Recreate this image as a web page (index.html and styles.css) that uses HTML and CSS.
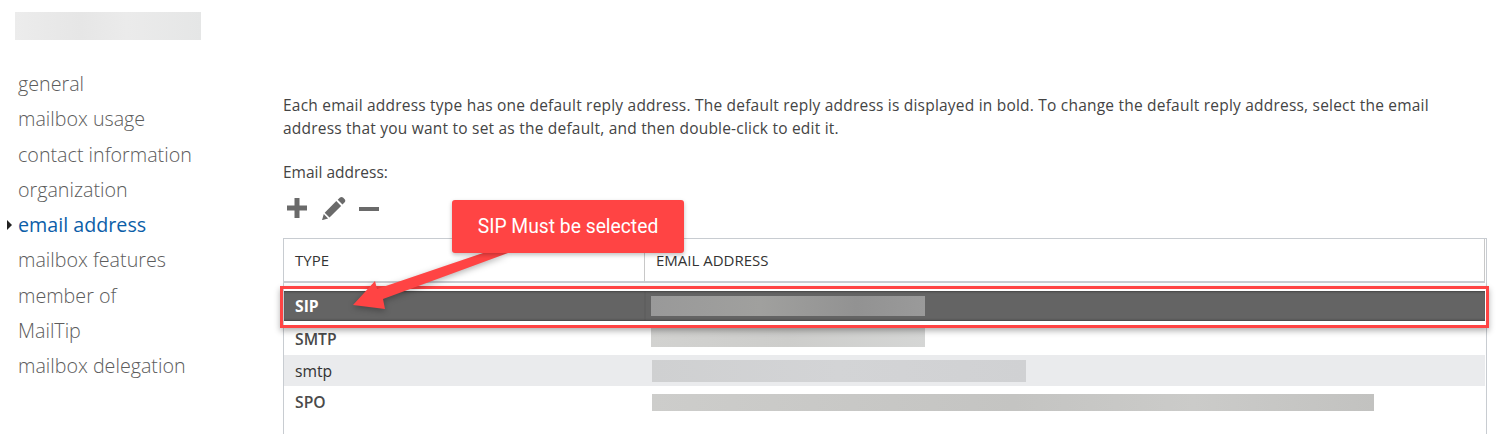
FILE: index.html
```html
<!DOCTYPE html>
<html lang="en">
<head>
  <meta charset="UTF-8">
  <title>email address</title>
  <link rel="stylesheet" href="styles.css">
</head>
<body>

  <div class="page">
    <div class="sidebar">
      <div class="name-blur"></div>
      <ul class="nav">
        <li>general</li>
        <li>mailbox usage</li>
        <li>contact information</li>
        <li>organization</li>
        <li class="active">email address</li>
        <li>mailbox features</li>
        <li>member of</li>
        <li>MailTip</li>
        <li>mailbox delegation</li>
      </ul>
    </div>

    <div class="main">
      <p class="intro">Each email address type has one default reply address. The default reply address is displayed in bold. To change the default reply address, select the email address that you want to set as the default, and then double-click to edit it.</p>
      <div class="field-label">Email address:</div>

      <div class="toolbar">
        <svg class="tool-add" width="22" height="22" viewBox="0 0 22 22"><path d="M8.5 1h5v7.5H21v5h-7.5V21h-5v-7.5H1v-5h7.5z"/></svg>
        <svg class="tool-edit" width="24" height="24" viewBox="0 0 24 24"><path d="M18 1.5c1-.8 2-.8 3 0l1.700 1.800c.8 1 .8 2 0 3L20.500 8.500 15.700 3.700zM14.300 5.100l4.800 4.800L7.500 21.500 2.700 16.700zM1.800 18l4.300 4.400L0 24.200z"/></svg>
        <svg class="tool-remove" width="20" height="6" viewBox="0 0 20 6"><path d="M0 1h20v4H0z"/></svg>
      </div>

      <div class="grid-box">
        <table class="grid">
          <thead>
            <tr>
              <th class="col-type">TYPE</th>
              <th>EMAIL ADDRESS</th>
            </tr>
          </thead>
          <tbody>
            <tr class="selected">
              <td>SIP</td>
              <td><div class="blur blur-sip"></div></td>
            </tr>
            <tr class="bold">
              <td>SMTP</td>
              <td><div class="blur blur-smtp"></div></td>
            </tr>
            <tr class="alt">
              <td>smtp</td>
              <td><div class="blur blur-smtp2"></div></td>
            </tr>
            <tr class="bold">
              <td>SPO</td>
              <td><div class="blur blur-spo"></div></td>
            </tr>
          </tbody>
        </table>
      </div>
    </div>
  </div>

  <!-- annotation drawn over the screenshot -->
  <div class="mark-box"></div>
  <svg class="mark-arrow" width="1512" height="434" viewBox="0 0 1512 434">
    <polygon points="353,305 375,281 377,289 483,253 508,253 383,299 385,309"/>
  </svg>
  <div class="callout">SIP Must be selected</div>

</body>
</html>
```

FILE: styles.css
```css
html, body {
  margin: 0;
  height: 434px;
  overflow: hidden;
  background: #fff;
}
body {
  font-family: 'Open Sans', 'Noto Sans', sans-serif;
  color: #444;
  position: relative;
}
.page {
  display: flex;
  height: 434px;
}
.sidebar {
  width: 283px;
  flex-shrink: 0;
  padding: 12px 0 0 15px;
  box-sizing: border-box;
}
.name-blur {
  width: 186px;
  height: 28px;
  background: linear-gradient(90deg, #ececec, #e6e6e6 35%, #ebebeb 60%, #e5e6e6);
}
.nav {
  list-style: none;
  margin: 26px 0 0;
  padding: 0 0 0 3px;
}
.nav li {
  font-size: 19.7px;
  font-weight: 300;
  line-height: 35.3px;
  color: #5c5c5c;
  white-space: nowrap;
}
.nav li.active {
  color: #0b5ea8;
  font-weight: 400;
  position: relative;
}
.nav li.active::before {
  content: "";
  position: absolute;
  left: -11px;
  top: 13px;
  border-left: 5px solid #222;
  border-top: 5px solid transparent;
  border-bottom: 5px solid transparent;
}
.main {
  flex: 1;
  padding-top: 94px;
  padding-right: 25px;
  min-width: 0;
}
.intro {
  margin: 0;
  font-size: 15.5px;
  letter-spacing: 0.21px;
  line-height: 23px;
  max-width: 1170px;
}
.field-label {
  font-size: 15.5px;
  line-height: 20px;
  margin-top: 22px;
}
.toolbar {
  display: flex;
  align-items: center;
  height: 32px;
  margin-top: 10px;
  padding-left: 3px;
}
.toolbar svg {
  fill: #6a6a6a;
  display: block;
}
.tool-add {
  margin-right: 14px;
}
.tool-edit {
  margin-right: 13px;
}
.tool-remove {
  margin-top: 2px;
}
.grid-box {
  margin-top: 14px;
  height: 196px;
  width: 1204px;
  border: 1px solid #c8ccd1;
  border-bottom: none;
  box-sizing: border-box;
}
.grid {
  width: 1201px;
  border-collapse: separate;
  border-spacing: 0;
  table-layout: fixed;
  font-size: 15.7px;
}
.grid th {
  height: 44px;
  padding: 0 0 0 11px;
  text-align: left;
  font-size: 15px;
  font-weight: 400;
  color: #333;
  border-right: 1px solid #c8c8c8;
  border-bottom: 2px solid #c8ccd1;
  box-sizing: border-box;
}
.col-type {
  width: 361px;
}
.grid td {
  height: 32px;
  padding: 0 0 0 11px;
  color: #333;
}
.grid td + td {
  padding-left: 6px;
}
.grid tr.selected td {
  height: 30px;
  background: #646464;
  background-clip: padding-box;
  color: #fff;
  font-weight: 700;
  border-top: 8px solid #fff;
  border-bottom: 2px solid #fff;
  box-shadow: inset 0 2px 2px -1px #444, inset 0 -2px 2px -1px #444;
}
.grid tr.bold td {
  font-weight: 600;
  color: #4a4a4a;
}
.grid tr.alt td {
  height: 31px;
  background: #eaebed;
}
.blur {
  height: 20px;
}
.blur-sip {
  width: 274px;
  background: linear-gradient(90deg, #999, #a0a09e 40%, #929292 75%, #9a9a9a);
}
.blur-smtp {
  width: 274px;
  height: 22px;
  margin-bottom: 6px;
  background: linear-gradient(90deg, #d2d2d0, #cdcdcb 50%, #d5d6d5);
}
.blur-smtp2 {
  width: 374px;
  height: 22px;
  margin-left: 1px;
  background: linear-gradient(90deg, #cfd0d1, #d3d4d6 50%, #d0d1d3);
}
.blur-spo {
  width: 722px;
  height: 17px;
  margin-left: 1px;
  background: linear-gradient(90deg, #cdcdcb, #c4c4c2 50%, #cbcbc9 75%, #c2c2c0);
}
.mark-box {
  position: absolute;
  left: 280px;
  top: 286px;
  width: 1209px;
  height: 42px;
  box-sizing: border-box;
  border: 3px solid #ff4444;
  box-shadow: 0 3px 6px rgba(0, 0, 0, 0.3);
}
.mark-arrow {
  position: absolute;
  left: 0;
  top: 0;
  filter: drop-shadow(0 2px 3px rgba(0, 0, 0, 0.3));
}
.mark-arrow polygon {
  fill: #ff4444;
}
.callout {
  position: absolute;
  left: 452px;
  top: 200px;
  width: 232px;
  height: 53px;
  border-radius: 3px;
  background: #ff4444;
  color: #fff;
  font-family: 'Roboto', 'Liberation Sans', sans-serif;
  font-size: 19.3px;
  line-height: 53px;
  text-align: center;
  box-shadow: 0 2px 4px rgba(0, 0, 0, 0.25);
}
```
